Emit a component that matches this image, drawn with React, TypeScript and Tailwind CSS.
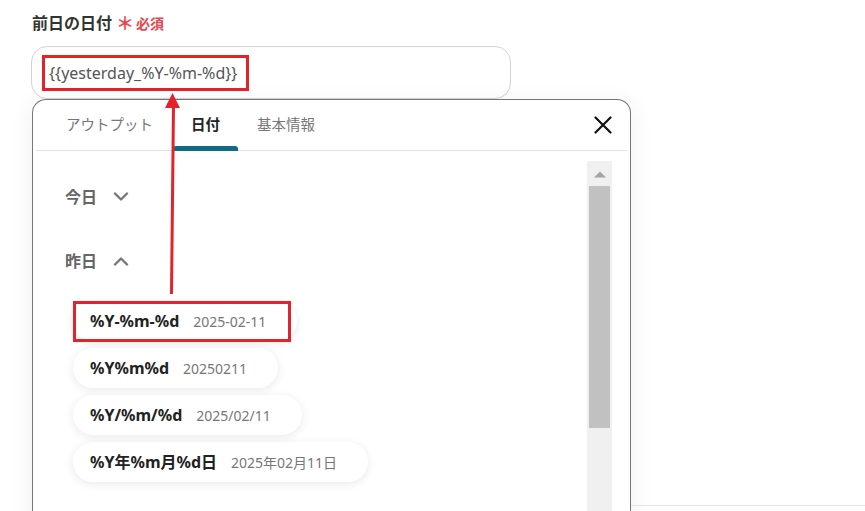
import React from "react";

const FONT = { fontFamily: '"Noto Sans", "Noto Sans CJK JP", sans-serif' };

function Chevron({ up }: { up?: boolean }) {
  return (
    <svg width="16" height="10" viewBox="0 0 16 10" className="ml-[16px]">
      {up ? (
        <path d="M2 8.5 L8 2.5 L14 8.5" fill="none" stroke="#777" strokeWidth="2.4" strokeLinecap="round" strokeLinejoin="round" />
      ) : (
        <path d="M2 1.5 L8 7.5 L14 1.5" fill="none" stroke="#777" strokeWidth="2.4" strokeLinecap="round" strokeLinejoin="round" />
      )}
    </svg>
  );
}

function Pill({ fmt, sample, highlight }: { fmt: string; sample: string; highlight?: boolean }) {
  return (
    <div className="relative self-start flex items-center h-[40px] rounded-full bg-white pl-[17px] pr-[31px] shadow-[0_2px_10px_rgba(0,0,0,0.09)]">
      <span className="text-[16px] font-bold text-[#222]">{fmt}</span>
      <span className="ml-[14px] text-[14px] text-[#777]">{sample}</span>
      {highlight && (
        <span className="absolute left-0 top-0 bottom-[-1px] right-[6px] border-[3px] border-[#e3232b]" />
      )}
    </div>
  );
}

export default function App() {
  return (
    <div className="relative w-[865px] h-[511px] overflow-hidden bg-white" style={FONT}>
      {/* label */}
      <div className="flex items-center pl-[32px] pt-[11px] h-[46px] pb-[11px]">
        <span className="text-[16px] font-bold text-[#333]">前日の日付</span>
        <span className="ml-[4px] text-[18px] font-bold text-[#e8464f] leading-none">＊</span>
        <span className="ml-[2px] text-[14px] font-bold text-[#e8464f]">必須</span>
      </div>
      {/* input */}
      <div className="ml-[31px] w-[480px] h-[53px] rounded-[16px] border border-[#cfd4da] flex items-center pl-[10px]">
        <div className="w-[207px] h-[36px] border-[3px] border-[#e3232b] flex items-center pl-[4px]">
          <span className="text-[16px] text-[#555]">{"{{yesterday_%Y-%m-%d}}"}</span>
        </div>
      </div>
      {/* popup row */}
      <div className="flex items-start h-[412px]">
        <div className="ml-[32px] w-[599px] h-[430px] border-[1.5px] border-b-0 border-[#777] rounded-t-[14px] bg-white shadow-[0_4px_24px_rgba(0,0,0,0.07)] flex flex-col">
          {/* header */}
          <div className="mx-[3px] h-[51px] border-b border-[#e3e3e3] flex items-end">
            <div className="flex items-end pl-[13px]">
              <div className="px-[17px] h-[50px] flex items-center text-[14.5px] text-[#777]">アウトプット</div>
              <div className="ml-[3px] relative w-[65px] h-[50px] flex items-center justify-center text-[14.5px] font-bold text-[#222]">
                日付
                <span className="absolute left-0 right-0 bottom-[-1px] h-[5px] rounded-t-[3px] bg-[#0e6a85]" />
              </div>
              <div className="pl-[19px] h-[50px] flex items-center text-[14.5px] text-[#777]">基本情報</div>
            </div>
            <div className="flex-1" />
            <div className="h-[50px] flex items-center pr-[15px]">
              <svg width="18" height="18" viewBox="0 0 18 18">
                <path d="M1.5 1.5 L16.5 16.5 M16.5 1.5 L1.5 16.5" stroke="#111" strokeWidth="2.2" strokeLinecap="round" />
              </svg>
            </div>
          </div>
          {/* content */}
          <div className="flex flex-1">
            <div className="flex-1 flex flex-col pt-[14px] pl-[32px]">
              <div className="h-[64px] flex items-center">
                <span className="text-[16px] font-bold text-[#666]">今日</span>
                <Chevron />
              </div>
              <div className="h-[64px] flex items-center">
                <span className="text-[16px] font-bold text-[#666]">昨日</span>
                <Chevron up />
              </div>
              <div className="mt-[8px] pl-[8px] flex flex-col gap-[7px]">
                <Pill fmt="%Y-%m-%d" sample="2025-02-11" highlight />
                <Pill fmt="%Y%m%d" sample="20250211" />
                <Pill fmt="%Y/%m/%d" sample="2025/02/11" />
                <Pill fmt="%Y年%m月%d日" sample="2025年02月11日" />
              </div>
            </div>
            <div className="mt-[10px] mr-[18px] w-[25px] bg-[#f0f0f0] flex flex-col items-center">
              <svg width="12" height="7" viewBox="0 0 12 7" className="mt-[10px]">
                <path d="M0 6.5 L6 0.5 L12 6.5 Z" fill="#a3a3a3" />
              </svg>
              <div className="mt-[8px] w-[21px] h-[242px] bg-[#c1c1c1]" />
            </div>
          </div>
        </div>
        <div className="flex-1 h-[407px] border-b border-[#e5e5e5]" />
      </div>
      {/* annotation arrow */}
      <svg className="absolute left-0 top-0 pointer-events-none" width="865" height="511">
        <line x1="173.5" y1="104" x2="171.5" y2="294" stroke="#e3232b" strokeWidth="3" />
        <path d="M172.5 93 L180 108 L165 108 Z" fill="#e3232b" />
      </svg>
    </div>
  );
}
